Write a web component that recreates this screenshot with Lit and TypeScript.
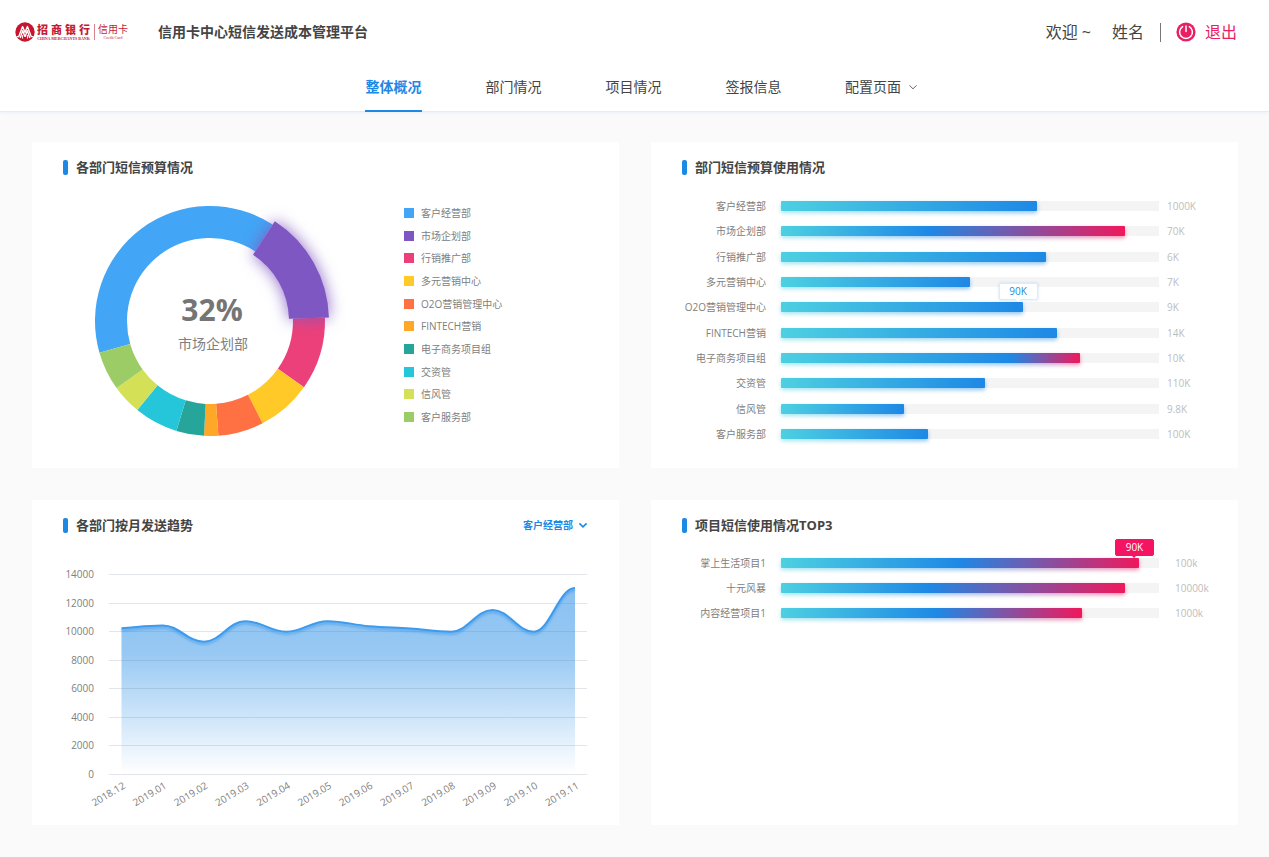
import { LitElement, html, svg, css } from "lit";
import { customElement, property, state } from "lit/decorators.js";
import { classMap } from "lit/directives/class-map.js";
import { styleMap } from "lit/directives/style-map.js";

interface Department {
  name: string;
  color: string;
  /** Slice limits, in degrees clockwise from the top. */
  from: number;
  to: number;
  usage: number;
  total: string;
  /** Share of the bar at which it starts to turn red; absent on a normal bar. */
  hot?: number;
  tip?: string;
}

interface BarItem {
  name: string;
  usage: number;
  total: string;
  hot?: number;
  tip?: string;
}

const DEPARTMENTS: Department[] = [
  { name: "客户经营部", color: "#42a5f5", from: 254, to: 393, usage: 67.7, total: "1000K" },
  { name: "市场企划部", color: "#7e57c2", from: 33, to: 88.3, usage: 91, total: "70K", hot: 43 },
  { name: "行销推广部", color: "#ec407a", from: 88.3, to: 125.2, usage: 70.2, total: "6K" },
  { name: "多元营销中心", color: "#ffca28", from: 125.2, to: 152.8, usage: 50, total: "7K" },
  { name: "O2O营销管理中心", color: "#ff7043", from: 152.8, to: 175.8, usage: 63.9, total: "9K", tip: "90K" },
  { name: "FINTECH营销", color: "#ffa726", from: 175.8, to: 183, usage: 73.1, total: "14K" },
  { name: "电子商务项目组", color: "#26a69a", from: 183, to: 197, usage: 79, total: "10K", hot: 77 },
  { name: "交资管", color: "#26c6da", from: 197, to: 219.2, usage: 54, total: "110K" },
  { name: "信风管", color: "#d4e157", from: 219.2, to: 234.3, usage: 32.6, total: "9.8K" },
  { name: "客户服务部", color: "#9ccc65", from: 234.3, to: 254, usage: 38.9, total: "100K" },
];

const PROJECTS: BarItem[] = [
  { name: "掌上生活项目1", usage: 94.7, total: "100k", hot: 50, tip: "90K" },
  { name: "十元风暴", usage: 91, total: "10000k", hot: 43 },
  { name: "内容经营项目1", usage: 79.5, total: "1000k", hot: 52 },
];

const TREND: [string, number][] = [
  ["2018.12", 10200],
  ["2019.01", 10400],
  ["2019.02", 9260],
  ["2019.03", 10700],
  ["2019.04", 9960],
  ["2019.05", 10700],
  ["2019.06", 10350],
  ["2019.07", 10180],
  ["2019.08", 9960],
  ["2019.09", 11480],
  ["2019.10", 9960],
  ["2019.11", 13020],
];

const FONT = css`"Open Sans", "Noto Sans CJK SC", sans-serif`;

@customElement("bank-logo")
class BankLogo extends LitElement {
  static styles = css`
    :host {
      display: flex;
      align-items: center;
      gap: 4px;
      color: #c41c35;
      font-family: "Liberation Serif", "Noto Sans CJK SC", serif;
    }
    .emblem {
      display: block;
      width: 20px;
      height: 20px;
      margin-right: -2px;
    }
    .name {
      display: flex;
      gap: 3px;
      font-size: 11px;
      line-height: 12px;
      font-weight: 900;
    }
    .latin {
      font-size: 4px;
      line-height: 5px;
      font-weight: 700;
      white-space: nowrap;
      text-align: center;
    }
    .part {
      padding-top: 1px;
    }
    .sub {
      border-left: 1px solid #d9828e;
      padding-left: 3px;
    }
    .card {
      font-size: 10px;
      line-height: 12px;
    }
    .light {
      font-weight: 400;
      line-height: 4px;
    }
  `;

  render() {
    return html`
      <svg class="emblem" viewBox="0 0 20 20" aria-hidden="true">
        <circle cx="10" cy="10" r="9.7" fill="#c8152f" />
        <g fill="none" stroke="#fff" stroke-width="1.4" stroke-linejoin="round">
          <path d="M1.6 14.6H3.8L7.6 4.6L10 10.4L12.4 4.6L16.2 14.6H18.4" />
          <path d="M5.2 16L7.7 8.6L9.9 14.8M10.1 14.8L12.3 8.6L14.8 16" />
          <path d="M7.6 16.6V13M12.4 16.6V13" stroke-width="1" />
        </g>
      </svg>
      <div class="part">
        <div class="name"><span>招</span><span>商</span><span>银</span><span>行</span></div>
        <div class="latin">CHINA MERCHANTS BANK</div>
      </div>
      <div class="sub">
        <div class="card">信用卡</div>
        <div class="latin light">Credit Card</div>
      </div>
    `;
  }
}

@customElement("budget-donut")
class BudgetDonut extends LitElement {
  @property() active = "";

  static styles = css`
    :host {
      display: flex;
      gap: 74px;
      padding: 25px 0 27px 27px;
      font-family: ${FONT};
    }
    .chart {
      flex: none;
      width: 240px;
      height: 240px;
      overflow: visible;
    }
    .percent {
      font-size: 30px;
      font-weight: 700;
      fill: #757575;
      text-anchor: middle;
    }
    .which {
      font-size: 14px;
      fill: #808080;
      text-anchor: middle;
    }
    .raised {
      filter: drop-shadow(0 0 8px rgba(126, 87, 194, 0.9));
    }
    .legend {
      display: flex;
      flex-direction: column;
      justify-content: space-between;
      list-style: none;
      margin: 0;
      padding: 5px 0 17px;
    }
    .entry {
      display: flex;
      align-items: center;
      gap: 7px;
      font-size: 10px;
      line-height: 14px;
      color: #808080;
      white-space: nowrap;
    }
    .swatch {
      width: 10px;
      height: 10px;
    }
  `;

  private ring(from: number, to: number, outer: number, inner: number) {
    const at = (deg: number, r: number) => {
      const a = (deg * Math.PI) / 180;
      return `${(120 + r * Math.sin(a)).toFixed(2)} ${(120 - r * Math.cos(a)).toFixed(2)}`;
    };
    const large = to - from > 180 ? 1 : 0;
    return `M${at(from, outer)}A${outer} ${outer} 0 ${large} 1 ${at(to, outer)}L${at(to, inner)}A${inner} ${inner} 0 ${large} 0 ${at(from, inner)}Z`;
  }

  render() {
    const raised = DEPARTMENTS.find((d) => d.name === this.active);
    return html`
      <svg class="chart" viewBox="0 0 240 240" role="img" aria-label="各部门短信预算情况">
        ${DEPARTMENTS.filter((d) => d !== raised).map(
          (d) => svg`<path d=${this.ring(d.from, d.to, 115, 83)} fill=${d.color} />`
        )}
        ${raised
          ? svg`<path class="raised" d=${this.ring(raised.from, raised.to, 119, 79)} fill=${raised.color} />`
          : null}
        <text class="percent" x="122" y="120">32%</text>
        <text class="which" x="123" y="148">${this.active}</text>
      </svg>
      <ul class="legend">
        ${DEPARTMENTS.map(
          (d) => html`<li class="entry">
            <span class="swatch" style=${styleMap({ background: d.color })}></span>${d.name}
          </li>`
        )}
      </ul>
    `;
  }
}

@customElement("usage-bars")
class UsageBars extends LitElement {
  @property({ attribute: false }) items: BarItem[] = [];
  @property({ type: Boolean, reflect: true }) compact = false;

  static styles = css`
    :host {
      display: flex;
      flex: 1;
      flex-direction: column;
      justify-content: space-between;
      padding: 23px 0 27px;
      font-family: ${FONT};
      font-size: 10px;
      line-height: 14px;
    }
    :host([compact]) {
      justify-content: flex-start;
      gap: 11px;
      padding-top: 22px;
    }
    .row {
      display: grid;
      grid-template-columns: 84px 1fr 48px;
      align-items: center;
    }
    .label {
      color: #808080;
      text-align: right;
      white-space: nowrap;
    }
    .track {
      height: 10px;
      margin-left: 15px;
      background: #f4f4f4;
    }
    .fill {
      position: relative;
      z-index: 0;
      height: 10px;
    }
    .ink,
    .glow {
      position: absolute;
      inset: 0;
      border-radius: 1px;
      background: linear-gradient(90deg, #4dd0e1, #1e88e5);
    }
    .glow {
      inset: 2px 0 -2px;
      filter: blur(2px);
      opacity: 0.5;
    }
    .value {
      padding-left: 8px;
      color: #bdbdbd;
    }
    :host([compact]) .value {
      padding-left: 16px;
    }
    .tip {
      position: absolute;
      right: -15px;
      bottom: 12px;
      width: 37px;
      border: 1px solid #dcebfa;
      border-radius: 2px;
      background: #fff;
      box-shadow: 0 0 3px rgba(30, 136, 229, 0.25);
      color: #1e88e5;
      line-height: 15px;
      text-align: center;
    }
    .tip::after {
      content: "";
      position: absolute;
      left: 50%;
      top: 100%;
      margin-left: -3px;
      border: 3px solid transparent;
      border-top-color: #fff;
      border-bottom-width: 0;
    }
    .tip.hot {
      border-color: #f41462;
      background: #f41462;
      box-shadow: none;
      color: #fff;
    }
    .tip.hot::after {
      border-top-color: #f41462;
    }
  `;

  render() {
    return this.items.map((item) => {
      const paint = item.hot
        ? { background: `linear-gradient(90deg, #4dd0e1, #1e88e5 ${item.hot}%, #f0185c)` }
        : {};
      return html`
        <div class="row">
          <span class="label">${item.name}</span>
          <div class="track">
            <div class="fill" style=${styleMap({ width: `${item.usage}%` })}>
              <div class="glow" style=${styleMap(paint)}></div>
              <div class="ink" style=${styleMap(paint)}></div>
              ${item.tip
                ? html`<div class=${classMap({ tip: true, hot: !!item.hot })}>${item.tip}</div>`
                : null}
            </div>
          </div>
          <span class="value">${item.total}</span>
        </div>
      `;
    });
  }
}

@customElement("trend-chart")
class TrendChart extends LitElement {
  static styles = css`
    :host {
      display: block;
      font-family: ${FONT};
    }
    .plot {
      display: block;
      width: 100%;
      height: auto;
    }
    .axis {
      font-size: 10px;
      fill: #808080;
      text-anchor: end;
    }
    .grid {
      stroke: #6e7f90;
      stroke-opacity: 0.2;
    }
    .line {
      fill: none;
      stroke: #3d9aec;
      stroke-width: 2;
      filter: drop-shadow(0 2px 1px rgba(30, 136, 229, 0.5));
    }
  `;

  /** Monotone cubic through the points, so that peaks stay on the months. */
  private curve(points: [number, number][]) {
    const n = points.length;
    const slope = points.slice(1).map((p, i) => (p[1] - points[i][1]) / (p[0] - points[i][0]));
    const tangent = points.map((_, i) => {
      if (i === 0) return slope[0];
      if (i === n - 1) return 0;
      const a = slope[i - 1];
      const b = slope[i];
      return a * b <= 0 ? 0 : (2 * a * b) / (a + b);
    });
    let d = `M${points[0][0]} ${points[0][1]}`;
    for (let i = 1; i < n; i++) {
      const [x0, y0] = points[i - 1];
      const [x1, y1] = points[i];
      const h = (x1 - x0) * 0.4;
      d += `C${x0 + h} ${y0 + tangent[i - 1] * h} ${x1 - h} ${y1 - tangent[i] * h} ${x1} ${y1}`;
    }
    return d;
  }

  render() {
    const y = (v: number) => 240 - (v / 14000) * 200;
    const x = (i: number) => 58.5 + (i * 453.5) / 11;
    const points = TREND.map(([, v], i): [number, number] => [x(i), y(v)]);
    const line = this.curve(points);
    const levels = [14000, 12000, 10000, 8000, 6000, 4000, 2000, 0];
    return html`
      <svg class="plot" viewBox="0 0 525 291" role="img" aria-label="各部门按月发送趋势">
        <defs>
          <linearGradient id="fade" gradientUnits="userSpaceOnUse" x1="0" y1="54" x2="0" y2="240">
            <stop offset="0" stop-color="#1e88e5" stop-opacity="0.52" />
            <stop offset="0.35" stop-color="#1e88e5" stop-opacity="0.46" />
            <stop offset="1" stop-color="#1e88e5" stop-opacity="0" />
          </linearGradient>
        </defs>
        <path d="${line}V240H58.5Z" fill="url(#fade)" />
        ${levels.map(
          (v) => svg`
            <line class="grid" x1="46" x2="524" y1=${Math.round(y(v)) + 0.5} y2=${Math.round(y(v)) + 0.5} />
            <text class="axis" x="31" y=${Math.round(y(v)) + 4}>${v}</text>`
        )}
        <path class="line" d=${line} />
        ${TREND.map(
          ([month], i) => svg`
            <text class="axis" transform="translate(${x(i) + 3} 251) rotate(-31)" y="3">${month}</text>`
        )}
      </svg>
    `;
  }
}

@customElement("app-root")
class AppRoot extends LitElement {
  @state() private page = "整体概况";

  static styles = css`
    :host {
      display: flex;
      flex-direction: column;
      min-height: 100vh;
      background: #fafafb;
      color: #444;
      font-family: ${FONT};
    }
    .header {
      background: #fff;
      border-bottom: 1px solid #e3ebf6;
      box-shadow: 0 1px 3px rgba(60, 120, 200, 0.08);
    }
    .top {
      display: flex;
      align-items: center;
      height: 64px;
      padding: 0 32px 0 15px;
    }
    .title {
      margin: 0 auto 0 30px;
      font-size: 14px;
      line-height: 20px;
      font-weight: 700;
    }
    .user {
      display: flex;
      align-items: center;
      font-size: 16px;
      line-height: 24px;
    }
    .name {
      margin-left: 21px;
      padding-right: 16px;
    }
    .exit {
      display: flex;
      align-items: center;
      gap: 9px;
      margin-left: 15px;
      padding: 0;
      border: 0;
      background: none;
      color: #e91e63;
      font: inherit;
      cursor: pointer;
    }
    .rule {
      width: 1px;
      height: 19px;
      background: #777;
    }
    .power {
      width: 20px;
      height: 20px;
    }
    .nav {
      display: flex;
      justify-content: center;
      gap: 63px;
      padding-left: 14px;
    }
    .link {
      display: flex;
      align-items: center;
      justify-content: center;
      gap: 7px;
      box-sizing: border-box;
      min-width: 57px;
      height: 48px;
      border-bottom: 2px solid transparent;
      margin-bottom: -1px;
      color: inherit;
      font-size: 14px;
      line-height: 20px;
      text-decoration: none;
    }
    .link.on {
      border-color: #1e88e5;
      color: #1e88e5;
      font-weight: 700;
    }
    .down {
      width: 10px;
      height: 10px;
      fill: none;
      stroke: currentColor;
    }
    .link .down {
      opacity: 0.8;
    }
    .main {
      display: grid;
      grid-template-columns: repeat(2, minmax(0, 1fr));
      gap: 32px;
      padding: 30px 31px 32px 32px;
    }
    .card {
      display: flex;
      flex-direction: column;
      padding: 0 31px;
      background: #fff;
    }
    .head {
      display: flex;
      align-items: center;
      gap: 8px;
      padding-top: 16px;
    }
    .mark {
      width: 5px;
      height: 15px;
      border-radius: 2px;
      background: #1e88e5;
    }
    .heading {
      margin: 0;
      font-size: 13px;
      line-height: 18px;
      font-weight: 700;
    }
    .picker {
      display: flex;
      align-items: center;
      margin-left: auto;
      color: #1e88e5;
    }
    .select {
      appearance: none;
      field-sizing: content;
      margin: 0 -12px 0 0;
      padding: 0 17px 0 0;
      border: 0;
      background: none;
      color: inherit;
      font: 700 10px/18px ${FONT};
      cursor: pointer;
    }
    .picker .down {
      pointer-events: none;
      stroke-width: 1.6;
    }
  `;

  private chevron() {
    return html`<svg class="down" viewBox="0 0 10 10" aria-hidden="true"><path d="M1.4 3.4L5 6.8L8.6 3.4" /></svg>`;
  }

  private head(text: string, extra: unknown = null) {
    return html`<div class="head">
      <span class="mark"></span>
      <h2 class="heading">${text}</h2>
      ${extra}
    </div>`;
  }

  render() {
    const pages = ["整体概况", "部门情况", "项目情况", "签报信息", "配置页面"];
    return html`
      <header class="header">
        <div class="top">
          <bank-logo></bank-logo>
          <h1 class="title">信用卡中心短信发送成本管理平台</h1>
          <div class="user">
            <span>欢迎 ~</span>
            <span class="name">姓名</span>
            <span class="rule"></span>
            <button class="exit" type="button">
              <svg class="power" viewBox="0 0 20 20" aria-hidden="true">
                <circle cx="10" cy="10" r="9.6" fill="#e91e63" />
                <path d="M6.6 4.6A6.4 6.4 0 1 0 13.4 4.6" fill="none" stroke="#fff" stroke-width="1.5" stroke-linecap="round" />
                <path d="M10 4V9.4" stroke="#fff" stroke-width="1.5" stroke-linecap="round" />
              </svg>
              退出
            </button>
          </div>
        </div>
        <nav class="nav">
          ${pages.map(
            (p) => html`<a
              class=${classMap({ link: true, on: p === this.page })}
              href="#"
              @click=${(e: Event) => {
                e.preventDefault();
                this.page = p;
              }}
              >${p}${p === "配置页面" ? this.chevron() : null}</a
            >`
          )}
        </nav>
      </header>
      <main class="main">
        <section class="card">
          ${this.head("各部门短信预算情况")}
          <budget-donut active="市场企划部"></budget-donut>
        </section>
        <section class="card">
          ${this.head("部门短信预算使用情况")}
          <usage-bars .items=${DEPARTMENTS}></usage-bars>
        </section>
        <section class="card">
          ${this.head(
            "各部门按月发送趋势",
            html`<div class="picker">
              <select class="select" aria-label="部门">
                ${DEPARTMENTS.map((d) => html`<option>${d.name}</option>`)}
              </select>
              ${this.chevron()}
            </div>`
          )}
          <trend-chart></trend-chart>
        </section>
        <section class="card">
          ${this.head("项目短信使用情况TOP3")}
          <usage-bars compact .items=${PROJECTS}></usage-bars>
        </section>
      </main>
    `;
  }
}
